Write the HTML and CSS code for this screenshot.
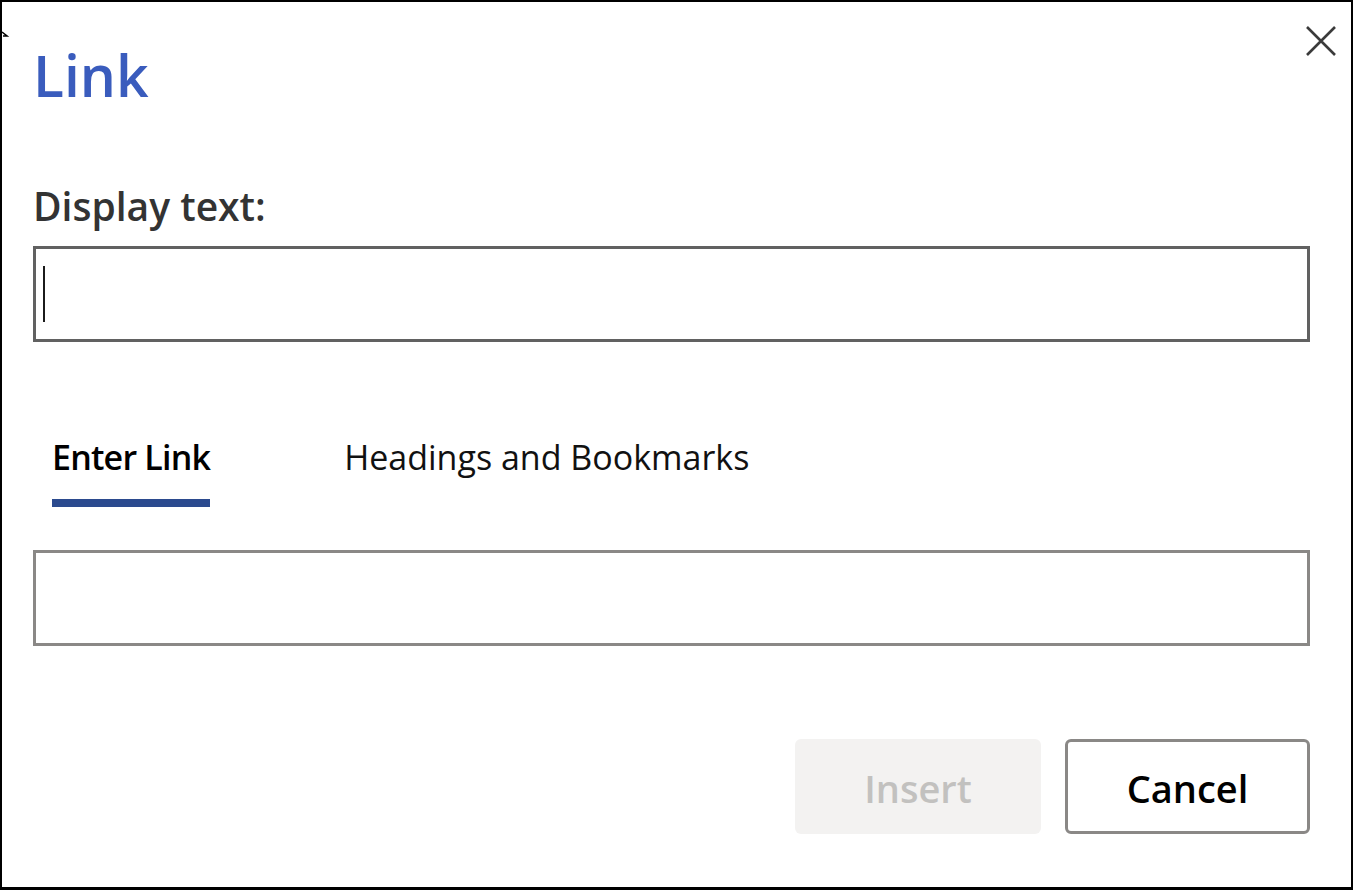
FILE: index.html
```html
<!DOCTYPE html>
<html>
<head>
<meta charset="utf-8">
<link rel="stylesheet" href="styles.css">
</head>
<body>
<div class="dialog">
  <svg class="notch" width="10" height="10" viewBox="0 0 10 10"><polyline points="1,1 6,5 2,5" fill="none" stroke="#000" stroke-width="1.6"/></svg>
  <button class="close" aria-label="Close">
    <svg width="32" height="32" viewBox="0 0 32 32"><path d="M2 2 L30 30 M30 2 L2 30" stroke="#3b3b3b" stroke-width="2.6" fill="none"/></svg>
  </button>
  <h1 class="title">Link</h1>
  <label class="label">Display text:</label>
  <div class="field field-dark"><span class="caret"></span></div>
  <div class="tabs">
    <div class="tab tab-active">Enter Link</div>
    <div class="tab">Headings and Bookmarks</div>
  </div>
  <div class="field field-light"></div>
  <div class="actions">
    <button class="btn btn-disabled">Insert</button>
    <button class="btn btn-cancel">Cancel</button>
  </div>
</div>
</body>
</html>
```
FILE: styles.css
```css
html, body {
  margin: 0;
  padding: 0;
  background: #fff;
}
.dialog {
  position: relative;
  box-sizing: border-box;
  width: 1353px;
  height: 890px;
  border-style: solid;
  border-color: #000;
  border-width: 2px 2px 3px 2px;
  padding: 43px 41px 0 31px;
  display: flex;
  flex-direction: column;
  font-family: "Open Sans", "Noto Sans", sans-serif;
  background: #fff;
}
.notch {
  position: absolute;
  left: -1px;
  top: 29px;
}
.close {
  position: absolute;
  top: 22px;
  right: 13px;
  width: 34px;
  height: 34px;
  padding: 1px;
  border: 0;
  background: transparent;
}
.title {
  margin: 0;
  font-size: 57px;
  line-height: 60px;
  font-weight: 600;
  color: #3a5cbd;
}
.label {
  margin-top: 82px;
  font-size: 39px;
  line-height: 37px;
  font-weight: 600;
  color: #333;
}
.field {
  box-sizing: border-box;
  height: 96px;
  border: 3px solid #616161;
  position: relative;
}
.field-dark {
  margin-top: 22px;
  border-color: #616161;
  padding: 17px 0 0 7px;
}
.caret {
  display: block;
  width: 2px;
  height: 56px;
  background: #1b1b1b;
}
.field-light {
  margin-top: 43px;
  border-color: #8a8886;
}
.tabs {
  margin-top: 98px;
  display: flex;
  padding-left: 19px;
}
.tab {
  font-size: 34px;
  line-height: 35px;
  color: #111;
  padding-bottom: 24px;
  border-bottom: 8px solid transparent;
}
.tab + .tab {
  margin-left: 134px;
}
.tab-active {
  font-weight: 600;
  letter-spacing: -0.8px;
  color: #000;
  border-bottom-color: #2b4a8e;
}
.actions {
  margin-top: 93px;
  display: flex;
  justify-content: flex-end;
  gap: 24px;
}
.btn {
  box-sizing: border-box;
  height: 95px;
  width: 246px;
  font-family: "Open Sans", "Noto Sans", sans-serif;
  font-size: 38px;
  font-weight: 600;
  border-radius: 6px;
  padding: 2px 0 0;
}
.btn-disabled {
  background: #f3f2f1;
  border: 0;
  color: #c2c1bf;
}
.btn-cancel {
  width: 245px;
  background: #fff;
  border: 3px solid #8a8886;
  color: #000;
}
```
